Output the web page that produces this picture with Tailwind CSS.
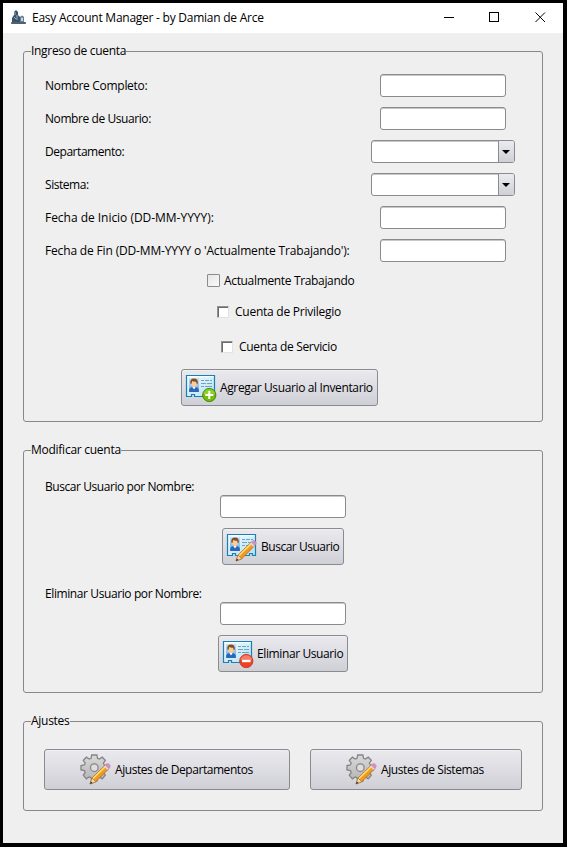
<!DOCTYPE html>
<html lang="es">
<head>
<meta charset="utf-8">
<title>Easy Account Manager - by Damian de Arce</title>
<script src="https://cdn.jsdelivr.net/npm/@tailwindcss/browser@4"></script>
</head>
<body class="w-[567px] h-[847px] overflow-hidden bg-black pt-[3px] pl-[3px] font-['Open_Sans','Noto_Sans',sans-serif] text-[12px] leading-4 text-black">
<svg class="absolute h-0 w-0">
  <defs>
    <linearGradient id="cardFill" x1="0" y1="0" x2="1" y2="1"><stop offset="0" stop-color="#f4fbff"/><stop offset="1" stop-color="#b4e0f3"/></linearGradient>
    <linearGradient id="gearFill" x1="0" y1="0" x2="0" y2="1"><stop offset="0" stop-color="#d9d9d9"/><stop offset="1" stop-color="#b4b4b4"/></linearGradient>
    <linearGradient id="photoFill" x1="0" y1="0" x2="0" y2="1"><stop offset="0" stop-color="#c5e2fa"/><stop offset="1" stop-color="#6ba6e3"/></linearGradient>
  </defs>
  <symbol id="card" viewBox="0 0 32 32">
    <path d="M1.500 3.500h28v21h-3v-2h-3v2h-14v-2h-3v2h-5z" fill="url(#cardFill)" stroke="#1482b4" stroke-width="1.200"/>
    <path d="M2.500 4.700h26" stroke="#fff" fill="none"/>
    <rect x="4" y="6" width="10" height="14" fill="url(#photoFill)"/>
    <path d="M4.200 20v-2.500q.8-2.300 3.300-2.500h3q2.500.2 3.300 2.500v2.500z" fill="#2868b8"/>
    <path d="M7.300 15l1.700 2.500 1.700-2.500z" fill="#fff"/>
    <ellipse cx="9" cy="11.300" rx="3.100" ry="3.700" fill="#f8cc9b"/>
    <path d="M5.300 11.500q-.5-5 3.700-5t3.800 5l-1 .8-.7-2.600q-2.500.2-3.900-.8l-.8 3.200z" fill="#874b20"/>
    <path d="M16 8.500h3m1 0h4m1 0h2M16 11.500h5m1 0h5M16 14.500h3m1 0h7" stroke="#69a6bd" fill="none"/>
  </symbol>
  <symbol id="pencil" viewBox="0 0 32 32">
    <path d="M10 30l2-6 13.500-13 3.500 3.500-13.300 13.300z" fill="#f39a1d" stroke="#a86a25" stroke-width=".8"/>
    <path d="M13 24.500l13-12.500" stroke="#ffe07a" stroke-width="1.500"/>
    <path d="M10 30l2-6 3.700 3.800z" fill="#f5d7a5" stroke="#8c6337" stroke-width=".5"/>
    <path d="M10 30l.9-2.600 1.700 1.600z" fill="#333"/>
    <path d="M24 12.500l3.500 3.500 1.500-1.500-3.500-3.500z" fill="#d8d8e2"/>
    <path d="M25.500 11l1.300-1.200q1.200-.7 2.600.6t.5 2.800l-1.200 1.200z" fill="#dc8fc2" stroke="#b080a8" stroke-width=".5"/>
  </symbol>
  <symbol id="plus" viewBox="0 0 32 32">
    <circle cx="24.300" cy="23" r="6.600" fill="#76bd0b" stroke="#44850f" stroke-width="1"/>
    <path d="M18.500 22a5.900 5.900 0 0 1 11.600 0z" fill="#a0d83c" opacity=".65"/>
    <path d="M24.300 19v8M20.300 23h8" stroke="#fff" stroke-width="2"/>
  </symbol>
  <symbol id="minus" viewBox="0 0 32 32">
    <circle cx="24.300" cy="23" r="6.600" fill="#ed4226" stroke="#c73a2b" stroke-width="1"/>
    <path d="M18.500 22a5.900 5.900 0 0 1 11.600 0z" fill="#ff947b" opacity=".7"/>
    <path d="M20 23h8.600" stroke="#fff" stroke-width="2.400"/>
  </symbol>
  <symbol id="gear" viewBox="0 0 32 32">
    <path d="M11.700 1h5.200l.6 3.300 1.900.8 2.800-1.900 3.100 3.100-1.900 2.800.8 1.900 3.300.6v4.300l-3.300.6-.8 1.900 1.900 2.800-3.100 3.700-2.800-1.900-1.900.8-.6 3.200h-5.200l-.6-3.200-1.900-.8-2.800 1.900-3.100-3.700 1.900-2.800-.8-1.900L1 15.900v-4.300l3.400-.6.8-1.900-1.900-2.800 3.100-3.100 2.800 1.900 1.900-.8z" fill="url(#gearFill)" stroke="#858585" stroke-width="1.300"/>
    <circle cx="14.300" cy="13.700" r="5.300" fill="#c2c2c4" opacity=".6"/>
    <circle cx="14.300" cy="13.700" r="3.800" fill="#dddde2" stroke="#8a8a8a" stroke-width="1.300"/>
  </symbol>
</svg>
<div class="flex h-[840px] w-[560px] flex-col bg-[#efefef]">
  <header class="flex h-[30px] shrink-0 items-center bg-white pl-[8px]">
    <svg class="h-4 w-4 shrink-0" viewBox="0 0 16 16">
      <path d="M3 2l2-2 2 2v3l2 2v5H1V8l2-3z" fill="#3a536a"/>
      <path d="M9 7q2-3 4 0v5h2v2H0v-2h9z" fill="#687d90"/>
      <path d="M4 2v3M3 7l2 2M6 5v5M11 7v2" stroke="#9eb5c5"/>
      <path d="M10 8h2v3h-2z" fill="#ccd6dd"/><path d="M1 13h13" stroke="#34475b"/>
    </svg>
    <h1 class="ml-[5px] w-[240px] whitespace-nowrap tracking-[-0.25px]">Easy Account Manager - by Damian de Arce</h1>
    <svg class="mb-px ml-auto mr-[17px] h-[11px] w-[102px]" viewBox="0 0 102 11" fill="none" stroke="#000"><path d="M0 5.500h10"/><rect x="45.500" y=".5" width="9" height="9"/><path d="M91.500 .5l9.500 9.500M101 .5l-9.500 9.500"/></svg>
  </header>

  <section class="relative mx-[20px] mt-[18px] h-[371px] shrink-0 rounded-[3px] border border-[#87888a] pl-[21px] pt-[22px]">
    <h2 class="absolute -top-[9px] left-[7px] bg-[#efefef] whitespace-nowrap tracking-[-0.31px]">Ingreso de cuenta</h2>
    <div class="flex flex-col gap-[10px]">
      <div class="flex h-[23px] items-center"><label class="w-[335px] whitespace-nowrap tracking-[-0.3px]">Nombre Completo:</label><input class="h-[23px] w-[126px] rounded-[3px] border border-[#8a8b8e] bg-white shadow-[inset_0_1px_0_#c8c8cb]"></div>
      <div class="flex h-[23px] items-center"><label class="w-[335px] whitespace-nowrap tracking-[-0.42px]">Nombre de Usuario:</label><input class="h-[23px] w-[126px] rounded-[3px] border border-[#8a8b8e] bg-white shadow-[inset_0_1px_0_#c8c8cb]"></div>
      <div class="flex h-[23px] items-center"><label class="w-[326px] whitespace-nowrap tracking-[-0.46px]">Departamento:</label>
        <div class="flex h-[23px] w-[144px] overflow-hidden rounded-[3px] border border-[#8a8b8e] bg-white shadow-[inset_0_1px_0_#c8c8cb]"><div class="ml-auto flex w-[16px] items-center justify-center border-l border-[#8a8b8e] bg-linear-to-b from-[#ebebf0] to-[#cfd0d7]"><svg class="mr-px h-1 w-[8px]" viewBox="0 0 8 4"><path d="M0 0h8L4 4z"/></svg></div></div></div>
      <div class="flex h-[23px] items-center"><label class="w-[326px] whitespace-nowrap tracking-[-0.45px]">Sistema:</label>
        <div class="flex h-[23px] w-[144px] overflow-hidden rounded-[3px] border border-[#8a8b8e] bg-white shadow-[inset_0_1px_0_#c8c8cb]"><div class="ml-auto flex w-[16px] items-center justify-center border-l border-[#8a8b8e] bg-linear-to-b from-[#ebebf0] to-[#cfd0d7]"><svg class="mr-px h-1 w-[8px]" viewBox="0 0 8 4"><path d="M0 0h8L4 4z"/></svg></div></div></div>
      <div class="flex h-[23px] items-center"><label class="w-[335px] whitespace-nowrap tracking-[-0.03px]">Fecha de Inicio (DD-MM-YYYY):</label><input class="h-[23px] w-[126px] rounded-[3px] border border-[#8a8b8e] bg-white shadow-[inset_0_1px_0_#c8c8cb]"></div>
      <div class="flex h-[23px] items-center"><label class="w-[335px] whitespace-nowrap tracking-[-0.16px]">Fecha de Fin (DD-MM-YYYY o 'Actualmente Trabajando'):</label><input class="h-[23px] w-[126px] rounded-[3px] border border-[#8a8b8e] bg-white shadow-[inset_0_1px_0_#c8c8cb]"></div>
    </div>
    <label class="ml-[162px] mt-[11px] flex h-4 items-center whitespace-nowrap tracking-[-0.34px]"><span class="mb-px mr-[4px] h-[13px] w-[13px] rounded-[1px] border border-[#8a8b8e] bg-linear-to-br from-[#e6e6e6] to-[#f9f9f9]"></span>Actualmente Trabajando</label>
    <label class="ml-[172px] mt-[15px] flex h-4 items-center whitespace-nowrap tracking-[-0.25px]"><span class="mb-px mr-[6px] h-[12px] w-[12px] border border-t-[#929292] border-l-[#929292] border-r-[#e2e2e2] border-b-[#e2e2e2] bg-white shadow-[inset_1px_1px_0_#696969]"></span>Cuenta de Privilegio</label>
    <label class="ml-[176px] mt-[19px] flex h-4 items-center whitespace-nowrap tracking-[-0.31px]"><span class="mb-px mr-[6px] h-[12px] w-[12px] border border-t-[#929292] border-l-[#929292] border-r-[#e2e2e2] border-b-[#e2e2e2] bg-white shadow-[inset_1px_1px_0_#696969]"></span>Cuenta de Servicio</label>
    <button class="ml-[136px] mt-[14px] flex h-[37px] w-[197px] items-center rounded-[3px] border border-[#8a8b8e] bg-linear-to-b from-[#e9e9ee] via-[#dddde3] to-[#cfd0d6] pl-[3px] shadow-[inset_0_1px_0_#f0f0f4]">
      <svg class="mr-[3px] h-8 w-8 shrink-0"><use href="#card"/><use href="#plus"/></svg><span class="whitespace-nowrap tracking-[-0.37px]">Agregar Usuario al Inventario</span>
    </button>
  </section>

  <section class="relative mx-[20px] mt-[28px] h-[243px] shrink-0 rounded-[3px] border border-[#87888a] pl-[21px] pt-[28px]">
    <h2 class="absolute -top-[9px] left-[7px] bg-[#efefef] whitespace-nowrap tracking-[-0.26px]">Modificar cuenta</h2>
    <label class="block h-4 whitespace-nowrap tracking-[-0.43px]">Buscar Usuario por Nombre:</label>
    <input class="ml-[175px] block h-[23px] w-[126px] rounded-[3px] border border-[#8a8b8e] bg-white shadow-[inset_0_1px_0_#c8c8cb]">
    <button class="ml-[177px] mt-[10px] flex h-[37px] w-[122px] items-center rounded-[3px] border border-[#8a8b8e] bg-linear-to-b from-[#e9e9ee] via-[#dddde3] to-[#cfd0d6] pl-[3px] shadow-[inset_0_1px_0_#f0f0f4]">
      <svg class="mr-[3px] h-8 w-8 shrink-0"><use href="#card"/><use href="#pencil"/></svg><span class="whitespace-nowrap tracking-[-0.48px]">Buscar Usuario</span>
    </button>
    <label class="mt-[21px] block h-4 whitespace-nowrap tracking-[-0.4px]">Eliminar Usuario por Nombre:</label>
    <input class="ml-[175px] block h-[23px] w-[126px] rounded-[3px] border border-[#8a8b8e] bg-white shadow-[inset_0_1px_0_#c8c8cb]">
    <button class="ml-[173px] mt-[10px] flex h-[37px] w-[130px] items-center rounded-[3px] border border-[#8a8b8e] bg-linear-to-b from-[#e9e9ee] via-[#dddde3] to-[#cfd0d6] pl-[3px] shadow-[inset_0_1px_0_#f0f0f4]">
      <svg class="mr-[3px] h-8 w-8 shrink-0"><use href="#card"/><use href="#minus"/></svg><span class="whitespace-nowrap tracking-[-0.39px]">Eliminar Usuario</span>
    </button>
  </section>

  <section class="relative mx-[20px] mt-[28px] flex h-[90px] shrink-0 gap-[20px] rounded-[3px] border border-[#87888a] pl-[20px] pt-[27px]">
    <h2 class="absolute -top-[9px] left-[7px] bg-[#efefef] whitespace-nowrap tracking-[-0.27px]">Ajustes</h2>
    <button class="flex h-[41px] w-[246px] items-center rounded-[3px] border border-[#8a8b8e] bg-linear-to-b from-[#e9e9ee] via-[#dddde3] to-[#cfd0d6] pl-[35px] shadow-[inset_0_1px_0_#f0f0f4]">
      <svg class="mr-[3px] h-8 w-8 shrink-0"><use href="#gear"/><use href="#pencil"/></svg><span class="whitespace-nowrap tracking-[-0.45px]">Ajustes de Departamentos</span>
    </button>
    <button class="flex h-[41px] w-[212px] items-center rounded-[3px] border border-[#8a8b8e] bg-linear-to-b from-[#e9e9ee] via-[#dddde3] to-[#cfd0d6] pl-[35px] shadow-[inset_0_1px_0_#f0f0f4]">
      <svg class="mr-[3px] h-8 w-8 shrink-0"><use href="#gear"/><use href="#pencil"/></svg><span class="whitespace-nowrap tracking-[-0.41px]">Ajustes de Sistemas</span>
    </button>
  </section>
</div>
</body>
</html>
